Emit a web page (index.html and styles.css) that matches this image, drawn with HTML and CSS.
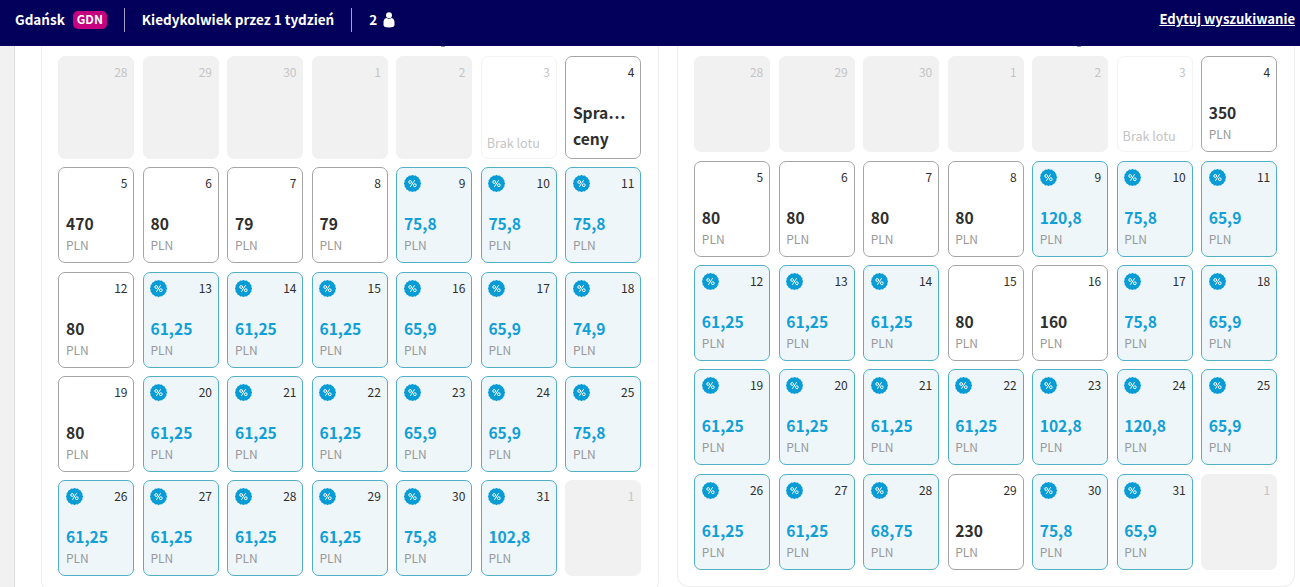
FILE: index.html
```
<!DOCTYPE html>
<html lang="pl">
	<head>
		<meta charset="UTF-8">
		<title>Gdańsk - kalendarz cen</title>
		<link rel="stylesheet" href="styles.css">
	</head>

	<body>
		<header class="topbar">
			<span class="city">Gdańsk</span>
			<span class="code">GDN</span>
			<span class="line"></span>
			<span class="when">Kiedykolwiek przez 1 tydzień</span>
			<span class="line"></span>
			<span class="people">2</span>
			<svg class="person" width="12" height="16" viewBox="0 0 12 16">
				<circle cx="6" cy="3.2" r="3"/>
				<path d="M3.6 6.1C1.3 6.4.5 8.5.5 10.5V13C.5 14.7 2.5 15.5 6 15.5S11.5 14.7 11.5 13V10.5C11.5 8.5 10.7 6.4 8.4 6.1Q6 7.7 3.6 6.1Z"/>
			</svg>
			<a class="edit" href="#">Edytuj wyszukiwanie</a>
		</header>

		<main class="page">
			<section class="month month-out">
				<div class="days" id="out"></div>
			</section>
			<section class="month month-back">
				<div class="days" id="back"></div>
			</section>
		</main>

		<script src="script.js"></script>
	</body>
</html>
```
FILE: styles.css
```
body {
	margin: 0;
	height: 587px;
	overflow: hidden;
	background: #f1f1f1;
	font-family: "Noto Sans CJK SC", "Noto Sans", sans-serif;
	color: #2e2e2e;
}

.topbar {
	height: 46px;
	box-sizing: border-box;
	padding: 0 5px 6px 15px;
	display: flex;
	align-items: center;
	background: #02005a;
	color: #fff;
	font-size: 13.5px;
	font-weight: bold;
	line-height: 20px;
	white-space: nowrap;
}

.city,
.when,
.people,
.edit {
	padding-bottom: 2px;
}

.code {
	width: 34px;
	height: 18px;
	margin-left: 8px;
	border-radius: 5px;
	background: #c6007e;
	font-size: 12px;
	line-height: 16px;
	text-align: center;
}

.line {
	width: 1px;
	height: 24px;
	margin: 0 17px;
	background: #a3a2c6;
}

.person {
	margin-left: 6px;
	fill: #fff;
}

.edit {
	margin-left: auto;
	color: #fff;
	font-size: 13.1px;
}

.page {
	height: 541px;
	margin-left: 14px;
	border-left: 1px solid #dcdcdc;
	padding-left: 26px;
	display: flex;
	align-items: flex-start;
	gap: 17.8px;
	background: #fff;
}

.month {
	width: 618px;
	box-sizing: border-box;
	border: 1px solid #eee;
	border-top: 0;
	border-radius: 0 0 12px 12px;
	padding: 0 16.6px 16px 16.4px;
}

/* tail of the month name, the rest is scrolled under the bar */
.month::before {
	content: "";
	display: block;
	width: 4px;
	height: 1px;
	margin: 0 0 9.3px 383px;
	background: #8f8fd0;
}

.days {
	display: grid;
	grid-template-columns: repeat(7, 1fr);
	grid-auto-rows: 96px;
	gap: 8.4px;
}

.month-out .days {
	grid-template-rows: 102.6px;
}

.day {
	box-sizing: border-box;
	border: 1px solid #a5a5a5;
	border-radius: 7px;
	padding: 7px 6px 9px 6.6px;
	display: flex;
	flex-direction: column;
	justify-content: space-between;
	background: #fff;
	min-width: 0;
}

.top {
	height: 17px;
	display: flex;
	align-items: center;
}

.num {
	margin-left: auto;
	font-size: 12px;
	line-height: 17px;
	padding-bottom: 2px;
}

.price {
	font-size: 15.6px;
	font-weight: bold;
	line-height: 26px;
	overflow: hidden;
	text-overflow: ellipsis;
}

.cur {
	font-size: 12px;
	line-height: 17px;
	color: #999;
}

.month-out .check {
	margin-bottom: -2px;
}

.sale {
	background: #eef6fa;
	border-color: #4fb0c8;
}

.sale .price {
	color: #109fd6;
}

.off {
	background: #f1f1f1;
	border-color: #f1f1f1;
	color: #c4c4c4;
}

.none {
	border-color: #f3f3f3;
	padding-left: 5px;
	padding-bottom: 7px;
	color: #c4c4c4;
}

.none .cur {
	font-size: 12.6px;
	color: #c4c4c4;
}

.badge {
	fill: #079cd6;
}

.badge .sign {
	fill: none;
	stroke: #fff;
	stroke-width: 1;
}
```
FILE: script.js
```
var out = ["28", "29", "30", "1", "2", "3 none", "4 Spra… ceny",
	"5 470", "6 80", "7 79", "8 79", "9 75,8 %", "10 75,8 %", "11 75,8 %",
	"12 80", "13 61,25 %", "14 61,25 %", "15 61,25 %", "16 65,9 %", "17 65,9 %", "18 74,9 %",
	"19 80", "20 61,25 %", "21 61,25 %", "22 61,25 %", "23 65,9 %", "24 65,9 %", "25 75,8 %",
	"26 61,25 %", "27 61,25 %", "28 61,25 %", "29 61,25 %", "30 75,8 %", "31 102,8 %", "1"];
var back = ["28", "29", "30", "1", "2", "3 none", "4 350",
	"5 80", "6 80", "7 80", "8 80", "9 120,8 %", "10 75,8 %", "11 65,9 %",
	"12 61,25 %", "13 61,25 %", "14 61,25 %", "15 80", "16 160", "17 75,8 %", "18 65,9 %",
	"19 61,25 %", "20 61,25 %", "21 61,25 %", "22 61,25 %", "23 102,8 %", "24 120,8 %", "25 65,9 %",
	"26 61,25 %", "27 61,25 %", "28 68,75 %", "29 230", "30 75,8 %", "31 65,9 %", "1"];

// round badge with a wavy edge and a percent sign
function badge() {
	var points = [];
	for(var i = 0; i < 32; i++) {
		var r = i % 2 ? 8 : 8.6;
		var a = i * Math.PI / 16;
		points.push((8.5 + r * Math.cos(a)).toFixed(2) + "," + (8.5 + r * Math.sin(a)).toFixed(2));
	}
	return '<svg class="badge" width="17" height="17" viewBox="0 0 17 17"><polygon points="' + points.join(" ") + '"/>' +
		'<g class="sign"><path d="M10.6 5.2L6.4 11.8"/><circle cx="6.2" cy="7" r="1.4"/><circle cx="10.8" cy="10.2" r="1.4"/></g></svg>';
}

function draw(id, list) {
	var html = "";
	for(var i = 0; i < list.length; i++) {
		var part = list[i].split(" ");
		var type = "";
		var bottom = "";
		if(part.length == 1) {
			type = " off";
		} else if(part[1] == "none") {
			type = " none";
			bottom = '<div class="cur">Brak lotu</div>';
		} else if(part[2] == "ceny") {
			bottom = '<div class="price check">' + part[1] + '<br>' + part[2] + '</div>';
		} else {
			type = part[2] == "%" ? " sale" : "";
			bottom = '<div><div class="price">' + part[1] + '</div><div class="cur">PLN</div></div>';
		}
		html += '<div class="day' + type + '"><div class="top">' + (type == " sale" ? badge() : "") +
			'<span class="num">' + part[0] + '</span></div>' + bottom + '</div>';
	}
	document.getElementById(id).innerHTML = html;
}

draw("out", out);
draw("back", back);
```
